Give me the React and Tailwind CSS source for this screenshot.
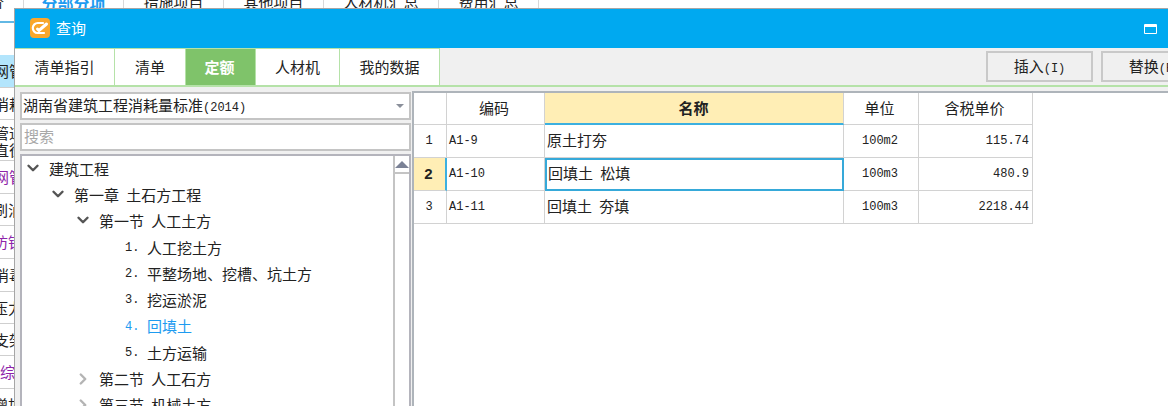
import React from 'react';
import { ChevronDown, ChevronRight } from 'lucide-react';

const CJK = "font-['Noto_Sans_CJK_SC','Liberation_Sans',sans-serif]";

const bgTabs = [
  { label: '分部分项', w: 'w-[100px]', cls: 'text-[16px] font-bold text-[#1e9bf0]' },
  { label: '措施项目', w: 'w-[100px]', cls: 'text-[#222]' },
  { label: '其他项目', w: 'w-[100px]', cls: 'text-[#222]' },
  { label: '人材机汇总', w: 'w-[115px]', cls: 'text-[#222]' },
  { label: '费用汇总', w: 'w-[100px]', cls: 'text-[#222]' },
];

const bgRows = [
  { h: 'h-[33px]', text: '网管', cls: 'text-[#222] -ml-[6px]' },
  { h: 'h-[32px]', text: '消耗', cls: 'text-[#222] -ml-[6px]' },
  { h: 'h-[41px]', text: '管道\n直径', cls: 'text-[#222] -ml-[6px] leading-[17px]' },
  { h: 'h-[33px]', text: '网管', cls: 'text-[#8e24aa] -ml-[6px]' },
  { h: 'h-[32px]', text: '刷油', cls: 'text-[#222] -ml-[7px]' },
  { h: 'h-[33px]', text: '防锈', cls: 'text-[#8e24aa] -ml-[7px]' },
  { h: 'h-[33px]', text: '消毒', cls: 'text-[#222] -ml-[6px]' },
  { h: 'h-[32px]', text: '压力', cls: 'text-[#222] -ml-[7px]' },
  { h: 'h-[32px]', text: '支架', cls: 'text-[#222] -ml-[6px]' },
  { h: 'h-[33px]', text: '综', cls: 'text-[#8e24aa]' },
  { h: 'h-[33px]', text: '增加', cls: 'text-[#222] -ml-[7px]' },
];

const tabs = [
  { label: '清单指引', w: 'w-[100px]' },
  { label: '清单', w: 'w-[71px]' },
  { label: '定额', w: 'w-[70px]', active: true },
  { label: '人材机', w: 'w-[84px]' },
  { label: '我的数据', w: 'w-[100px]' },
];

const tree = [
  { type: 'open', indent: 'pl-[2px]', label: '建筑工程' },
  { type: 'open', indent: 'pl-[27px]', label: '第一章 土石方工程' },
  { type: 'open', indent: 'pl-[52px]', label: '第一节 人工土方' },
  { type: 'leaf', num: '1.', label: '人工挖土方' },
  { type: 'leaf', num: '2.', label: '平整场地、挖槽、坑土方' },
  { type: 'leaf', num: '3.', label: '挖运淤泥' },
  { type: 'leaf', num: '4.', label: '回填土', active: true },
  { type: 'leaf', num: '5.', label: '土方运输' },
  { type: 'closed', indent: 'pl-[52px]', label: '第二节 人工石方' },
  { type: 'closed', indent: 'pl-[52px]', label: '第三节 机械土方' },
];

const rows = [
  { n: '1', code: 'A1-9', name: '原土打夯', unit: '100m2', price: '115.74' },
  { n: '2', code: 'A1-10', name: '回填土 松填', unit: '100m3', price: '480.9', selected: true },
  { n: '3', code: 'A1-11', name: '回填土 夯填', unit: '100m3', price: '2218.44' },
];

function Ascii({ children }) {
  return <span className="font-['Liberation_Mono',monospace] text-[12px]">{children}</span>;
}

function TreeRow({ item }) {
  if (item.type === 'leaf') {
    return (
      <div className={`flex h-[26.25px] items-center pl-[103px] ${item.active ? 'text-[#1e9bf0]' : 'text-[#222]'}`}>
        <span className="w-[22px] font-['Liberation_Mono',monospace] text-[12px]">{item.num}</span>
        <span>{item.label}</span>
      </div>
    );
  }
  const open = item.type === 'open';
  return (
    <div className={`flex h-[26.25px] items-center text-[#222] ${item.indent}`}>
      <span className="flex w-[25px] items-center">
        {open ? (
          <ChevronDown size={18} strokeWidth={3.2} className="-mt-[3px] text-[#555]" />
        ) : (
          <ChevronRight size={18} strokeWidth={3.2} className="text-[#b4b4b4]" />
        )}
      </span>
      <span className="whitespace-pre [word-spacing:4px]">{item.label}</span>
    </div>
  );
}

function Logo() {
  return (
    <svg width="20" height="20" viewBox="0 0 20 20" className="-mt-[1px] shrink-0">
      <rect width="20" height="20" rx="4" fill="#f9a72b" />
      <path d="M13 5H8a5 5 0 0 0-.4 10H14" fill="none" stroke="#fff" strokeWidth="2.2" strokeLinecap="round" />
      <path d="M7.5 11l1.5 1.5L16.5 6" fill="none" stroke="#fff" strokeWidth="3" strokeLinecap="round" />
    </svg>
  );
}

function Cell({ className = '', children }) {
  return <div className={`flex items-center border-r border-b border-[#d2d2d2] ${className}`}>{children}</div>;
}

export default function App() {
  return (
    <div className={`relative h-[406px] w-[1168px] overflow-hidden bg-white text-[15px] ${CJK}`}>
      {/* program window behind the dialog */}
      <div className="flex h-[23px] border-b-2 border-[#62b8e4]">
        <div className="h-[9px] w-[23px] overflow-hidden">
          <span className="relative -top-[9px] -ml-[11px] block w-[30px] text-[#222]">价</span>
        </div>
        {bgTabs.map((t) => (
          <div key={t.label} className={`${t.w} h-[9px] overflow-hidden border-l border-[#d8d8d8] text-center`}>
            <span className={`relative -top-[9px] ${t.cls}`}>{t.label}</span>
          </div>
        ))}
        <div className="h-[9px] w-px bg-[#d8d8d8]" />
      </div>
      <div className="h-[32px]" />
      <div className="w-[14px] overflow-hidden">
        {bgRows.map((r, i) => (
          <div key={i} className={`${r.h} overflow-hidden border-b border-[#cfcfcf] ${i === 0 ? 'bg-[#b3e5fc]' : ''}`}>
            <div className={`flex h-full items-center pt-[1px] ${r.cls}`}>
              <span className="shrink-0 whitespace-pre-line">{r.text}</span>
            </div>
          </div>
        ))}
      </div>

      {/* dialog */}
      <div className="absolute top-[8px] right-0 bottom-0 left-[14px] flex flex-col border-t border-l border-[#a6a6a6] bg-[#f0f0f0]">
        <div className="flex h-[39px] shrink-0 items-center bg-[#00a9f0] pr-[11px] pl-[15px] text-white">
          <Logo />
          <span className="ml-[6px]">查询</span>
          <span className="ml-auto h-[10px] w-[13px] rounded-[1px] border border-t-[3px] border-white" />
        </div>

        <div className="flex h-[39px] shrink-0 items-stretch border-b-2 border-[#b5e2a8]">
          {tabs.map((t) => (
            <div
              key={t.label}
              className={`${t.w} flex items-center justify-center border-t border-r border-[#b5e2a8] ${
                t.active ? 'bg-[#7fc36a] pr-[2px] font-bold text-white' : 'bg-white text-[#222]'
              }`}
            >
              {t.label}
            </div>
          ))}
          <div className="ml-auto -mr-[40px] flex items-start gap-[8px] pt-[3px]">
            <button className="h-[31px] w-[107px] border-2 border-[#c9c9c9] text-[#222]">
              插入<Ascii>(I)</Ascii>
            </button>
            <button className="h-[31px] w-[107px] border-2 border-[#c9c9c9] text-[#222]">
              替换<Ascii>(R)</Ascii>
            </button>
          </div>
        </div>

        <div className="flex min-h-0 flex-1">
          {/* left panel */}
          <div className="flex w-[397px] shrink-0 flex-col gap-[3px] pt-[5px] pr-[1px] pl-[5px]">
            <div className="flex h-[28px] shrink-0 items-center border-2 border-[#c4c4c4] bg-white pr-[5px] pb-[2px] pl-[1px] text-[#222]">
              <span>湖南省建筑工程消耗量标准<Ascii>(2014)</Ascii></span>
              <span className="mt-[2px] ml-auto h-0 w-0 border-x-[4px] border-t-[4px] border-x-transparent border-t-[#8a8f9a]" />
            </div>
            <div className="flex h-[28px] shrink-0 items-center border-2 border-[#c4c4c4] bg-white pb-[1px] pl-[2px] text-[#a8a8a8]">
              搜索
            </div>
            <div className="flex min-h-0 flex-1 overflow-hidden border-2 border-b-0 border-[#b4b4bc] bg-white">
              <div className="min-w-0 flex-1">
                {tree.map((item) => (
                  <TreeRow key={item.label} item={item} />
                ))}
              </div>
              <div className="w-[16px] shrink-0 border-l-2 border-[#c4c4c4]">
                <div className="flex h-[18px] items-center justify-center border-b-2 border-[#c4c4c4]">
                  <span className="h-0 w-0 border-x-[7px] border-b-[7px] border-x-transparent border-b-[#7b8296]" />
                </div>
              </div>
            </div>
          </div>

          {/* result table */}
          <div className="mt-[4px] flex-1 border-t-2 border-l-2 border-[#aeb4ba] bg-white">
            <div className="grid w-[619px] grid-cols-[33px_98px_299px_75px_114px] auto-rows-[33px] grid-rows-[32px] text-[#222]">
              <Cell />
              <Cell className="justify-center pr-[3px]">编码</Cell>
              <Cell className="justify-center border-b-2 border-b-[#3cb0e0] bg-[#ffeeb5] pr-[1px] font-bold">名称</Cell>
              <Cell className="justify-center pr-[3px]">单位</Cell>
              <Cell className="justify-center pr-[2px]">含税单价</Cell>
              {rows.map((r) => (
                <React.Fragment key={r.n}>
                  <Cell className={`justify-center pr-[2px] ${r.selected ? 'border-r-2 border-r-[#3cb0e0] bg-[#ffeeb5]' : ''}`}>
                    {r.selected ? (
                      <span className="font-['Liberation_Sans',sans-serif] text-[15px] font-bold">{r.n}</span>
                    ) : (
                      <Ascii>{r.n}</Ascii>
                    )}
                  </Cell>
                  <Cell className="pl-[2px]">
                    <Ascii>{r.code}</Ascii>
                  </Cell>
                  <Cell
                    className={`whitespace-pre pb-[2px] [word-spacing:4px] ${
                      r.selected ? 'border-2! border-[#36a9d9]! pl-[1px]' : 'pl-[2px]'
                    }`}
                  >
                    {r.name}
                  </Cell>
                  <Cell className="justify-center pr-[2px]">
                    <Ascii>{r.unit}</Ascii>
                  </Cell>
                  <Cell className="justify-end pr-[3px]">
                    <Ascii>{r.price}</Ascii>
                  </Cell>
                </React.Fragment>
              ))}
            </div>
          </div>
        </div>
      </div>
    </div>
  );
}
